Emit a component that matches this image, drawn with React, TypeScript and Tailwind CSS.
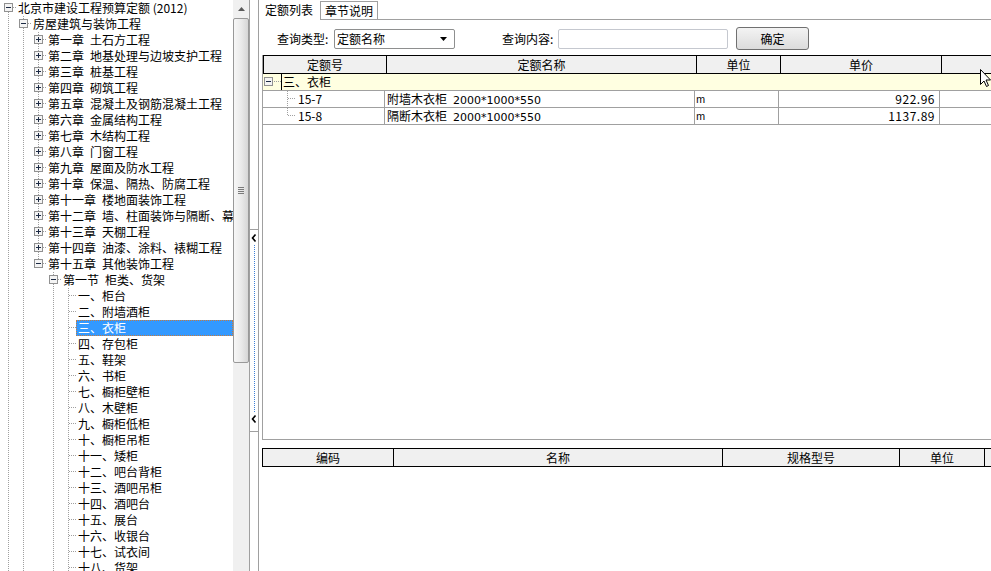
import React from 'react';

type Row = {
  level: number;
  label: string;
  guides: number[];
  top: boolean;
  more: boolean;
  exp?: '+' | '-';
  selected?: boolean;
};

const chapters = [
  '第一章\u2002土石方工程',
  '第二章\u2002地基处理与边坡支护工程',
  '第三章\u2002桩基工程',
  '第四章\u2002砌筑工程',
  '第五章\u2002混凝土及钢筋混凝土工程',
  '第六章\u2002金属结构工程',
  '第七章\u2002木结构工程',
  '第八章\u2002门窗工程',
  '第九章\u2002屋面及防水工程',
  '第十章\u2002保温、隔热、防腐工程',
  '第十一章\u2002楼地面装饰工程',
  '第十二章\u2002墙、柱面装饰与隔断、幕墙工程',
  '第十三章\u2002天棚工程',
  '第十四章\u2002油漆、涂料、裱糊工程',
  '第十五章\u2002其他装饰工程',
];

const items = [
  '一、柜台', '二、附墙酒柜', '三、衣柜', '四、存包柜', '五、鞋架', '六、书柜',
  '七、橱柜壁柜', '八、木壁柜', '九、橱柜低柜', '十、橱柜吊柜', '十一、矮柜',
  '十二、吧台背柜', '十三、酒吧吊柜', '十四、酒吧台', '十五、展台', '十六、收银台',
  '十七、试衣间', '十八、货架',
];

const rows: Row[] = [
  { level: 0, label: '北京市建设工程预算定额 (2012)', guides: [], top: false, more: true, exp: '-' },
  { level: 1, label: '房屋建筑与装饰工程', guides: [0], top: true, more: true, exp: '-' },
  ...chapters.map((c, i) => ({
    level: 2,
    label: c,
    guides: [0, 1],
    top: true,
    more: i < chapters.length - 1,
    exp: (i === chapters.length - 1 ? '-' : '+') as '+' | '-',
  })),
  { level: 3, label: '第一节\u2002柜类、货架', guides: [0, 1], top: true, more: true, exp: '-' },
  ...items.map((t) => ({
    level: 4,
    label: t,
    guides: [0, 1, 3],
    top: true,
    more: true,
    selected: t === '三、衣柜',
  })),
];

const dot = '#a0a0a0';

function Box({ sign, x, y }: { sign: '+' | '-'; x: number; y: number }) {
  return (
    <>
      <rect x={x + 0.5} y={y + 0.5} width="8" height="8" fill="#f4f4f4" stroke="#919191" />
      <line x1={x + 2} y1={y + 4.5} x2={x + 7} y2={y + 4.5} stroke="#1c2a44" />
      {sign === '+' && <line x1={x + 4.5} y1={y + 2} x2={x + 4.5} y2={y + 7} stroke="#1c2a44" />}
    </>
  );
}

function TreeCol({ pass, own, row }: { pass?: boolean; own?: boolean; row?: Row }) {
  return (
    <svg width="15" height="16" className="shrink-0 block">
      {pass && <line x1="7.5" y1="0" x2="7.5" y2="16" stroke={dot} strokeDasharray="1 1" />}
      {own && row && (
        <>
          {row.top && <line x1="7.5" y1="0" x2="7.5" y2="8" stroke={dot} strokeDasharray="1 1" />}
          {row.more && <line x1="7.5" y1="8" x2="7.5" y2="16" stroke={dot} strokeDasharray="1 1" />}
          <line x1="8" y1="7.5" x2="15" y2="7.5" stroke={dot} strokeDasharray="1 1" />
          {row.exp && <Box sign={row.exp} x={3} y={3} />}
        </>
      )}
    </svg>
  );
}

function TreeRow({ row }: { row: Row }) {
  const cols = [];
  for (let i = 0; i < row.level; i++) cols.push(<TreeCol key={i} pass={row.guides.includes(i)} />);
  cols.push(<TreeCol key="own" own row={row} />);
  return (
    <div className="flex h-4 pl-px whitespace-pre">
      {cols}
      {row.selected ? (
        <div className="flex-1 h-4 pl-px border border-dotted border-[#c87a3c] bg-[#3399ff] text-white leading-[14px]">{row.label}</div>
      ) : (
        <div className="flex-1 h-4 pl-[2px] leading-4">{row.label}</div>
      )}
    </div>
  );
}

function Scrollbar() {
  return (
    <div className="w-4 h-full bg-[#f0f0f0] flex flex-col shrink-0">
      <div className="h-[18px] flex items-center justify-center">
        <svg width="7" height="4"><path d="M0 4 L3.5 0 L7 4 Z" fill="#5a5a5a" /></svg>
      </div>
      <div className="h-[345px] rounded-[2px] border border-[#999] bg-gradient-to-r from-[#f7f7f7] via-[#ebebeb] to-[#d6d6d6] flex items-center justify-center">
        <div className="flex flex-col gap-[1px]">
          <div className="w-[6px] h-px bg-[#7a7a7a]" />
          <div className="w-[6px] h-px bg-[#7a7a7a]" />
          <div className="w-[6px] h-px bg-[#7a7a7a]" />
          <div className="w-[6px] h-px bg-[#7a7a7a]" />
        </div>
      </div>
    </div>
  );
}

function Chevron() {
  return (
    <svg width="6" height="8" className="block">
      <path d="M4.5 0.5 L1.5 4 L4.5 7.5" fill="none" stroke="#000" strokeWidth="1.6" />
    </svg>
  );
}

function Splitter() {
  return (
    <div className="w-[10px] h-full border-x border-[#a0a0a0] bg-white flex flex-col shrink-0">
      <div className="h-[229px]" />
      <div className="h-[203px] border-y border-[#a0a0a0] flex flex-col items-center pt-[4px] pb-[8px]">
        <Chevron />
        <div className="flex-1 my-[3px] border-l border-dotted border-[#3d7fd6]" />
        <Chevron />
      </div>
    </div>
  );
}

const hcell = 'h-full border-r border-black bg-[#f0f0f0] text-center leading-[17px] shrink-0';

export default function App() {
  return (
    <div className="w-[991px] h-[571px] overflow-hidden flex bg-white relative text-[12px] text-black font-['Noto_Sans_CJK_SC',sans-serif]">
      <div className="w-[233px] h-full overflow-hidden shrink-0">
        {rows.map((r, i) => (
          <TreeRow key={i} row={r} />
        ))}
      </div>
      <Scrollbar />
      <Splitter />

      <div className="flex-1 flex flex-col min-w-0">
        <div className="h-[20px] flex shrink-0">
          <div className="w-[61px] h-[20px] pl-[6px] leading-[19px]">定额列表</div>
          <div className="mt-px w-[58px] h-[19px] border border-[#a0a0a0] text-center leading-[17px]">章节说明</div>
          <div className="flex-1 border-b border-[#a0a0a0]" />
        </div>

        <div className="mt-[7px] h-[23px] flex items-center shrink-0">
          <span className="ml-[18px] w-[57px]">查询类型:</span>
          <div className="w-[121px] h-[20px] border border-[#8e8f8f] rounded-[2px] flex items-center justify-between pl-[2px] pr-[7px] bg-white">
            <span className="leading-4">定额名称</span>
            <svg width="7" height="4"><path d="M0 0 L7 0 L3.5 4 Z" fill="#000" /></svg>
          </div>
          <span className="ml-[47px] w-[56px]">查询内容:</span>
          <div className="w-[170px] h-[20px] border border-[#c5c8cf] rounded-[2px]" />
          <button className="ml-[8px] w-[73px] h-[23px] rounded-[3px] border border-[#707070] bg-gradient-to-b from-[#f3f3f3] to-[#dcdcdc] leading-4">确定</button>
        </div>

        <div className="mt-[5px] ml-[3px] h-[385px] border-l border-b border-[#a0a0a0] flex flex-col shrink-0">
          <div className="h-[19px] flex border-y border-l border-black shrink-0">
            <div className={`${hcell} w-[123px]`}>定额号</div>
            <div className={`${hcell} w-[310px]`}>定额名称</div>
            <div className={`${hcell} w-[84px]`}>单位</div>
            <div className={`${hcell} w-[161px]`}>单价</div>
            <div className="flex-1 bg-[#f0f0f0]" />
          </div>

          <div className="h-[17px] bg-[#ffffe1] border-b border-[#a0a0a0] flex items-center">
            <svg width="18" height="16" className="block shrink-0">
              <Box sign="-" x={1} y={3} />
              <line x1="11" y1="7.5" x2="18" y2="7.5" stroke={dot} strokeDasharray="1 1" />
            </svg>
            <span className="h-4 border-l border-black pl-px leading-4">三、衣柜</span>
          </div>

          {[
            { code: '15-7', name: '附墙木衣柜', spec: '2000*1000*550', price: '922.96', last: false },
            { code: '15-8', name: '隔断木衣柜', spec: '2000*1000*550', price: '1137.89', last: true },
          ].map((d) => (
            <div key={d.code} className="h-[17px] border-b border-[#a0a0a0] flex">
              <div className="w-[122px] border-r border-[#a0a0a0] flex items-center shrink-0">
                <svg width="35" height="16" className="block shrink-0">
                  <line x1="24.5" y1="0" x2="24.5" y2="8" stroke={dot} strokeDasharray="1 1" />
                  {!d.last && <line x1="24.5" y1="8" x2="24.5" y2="16" stroke={dot} strokeDasharray="1 1" />}
                  <line x1="25" y1="7.5" x2="33" y2="7.5" stroke={dot} strokeDasharray="1 1" />
                </svg>
                <span className="leading-4">{d.code}</span>
              </div>
              <div className="w-[310px] border-r border-[#a0a0a0] pl-[2px] leading-4 whitespace-pre shrink-0">
                {d.name}{'\u2002'}<span className="text-[11px] font-['DejaVu_Sans',sans-serif]">{d.spec}</span>
              </div>
              <div className="w-[84px] border-r border-[#a0a0a0] pl-px leading-4 text-[10px] shrink-0">m</div>
              <div className="w-[161px] border-r border-[#a0a0a0] pr-[4px] text-right leading-4 tracking-[0.5px] shrink-0">{d.price}</div>
              <div className="flex-1" />
            </div>
          ))}
        </div>

        <div className="mt-[8px] ml-[3px] h-[19px] flex border-y border-l border-black shrink-0">
          <div className={`${hcell} w-[131px]`}>编码</div>
          <div className={`${hcell} w-[329px]`}>名称</div>
          <div className={`${hcell} w-[177px]`}>规格型号</div>
          <div className={`${hcell} w-[85px]`}>单位</div>
          <div className="flex-1 bg-[#f0f0f0]" />
        </div>
      </div>

      <svg width="12" height="19" className="absolute left-[980px] top-[69px]">
        <path d="M0.5 0.5 L0.5 15.5 L4 12 L6.5 17.5 L8.5 16.5 L6 11 L10.5 11 Z" fill="#fff" stroke="#000" strokeWidth="1" />
      </svg>
    </div>
  );
}
